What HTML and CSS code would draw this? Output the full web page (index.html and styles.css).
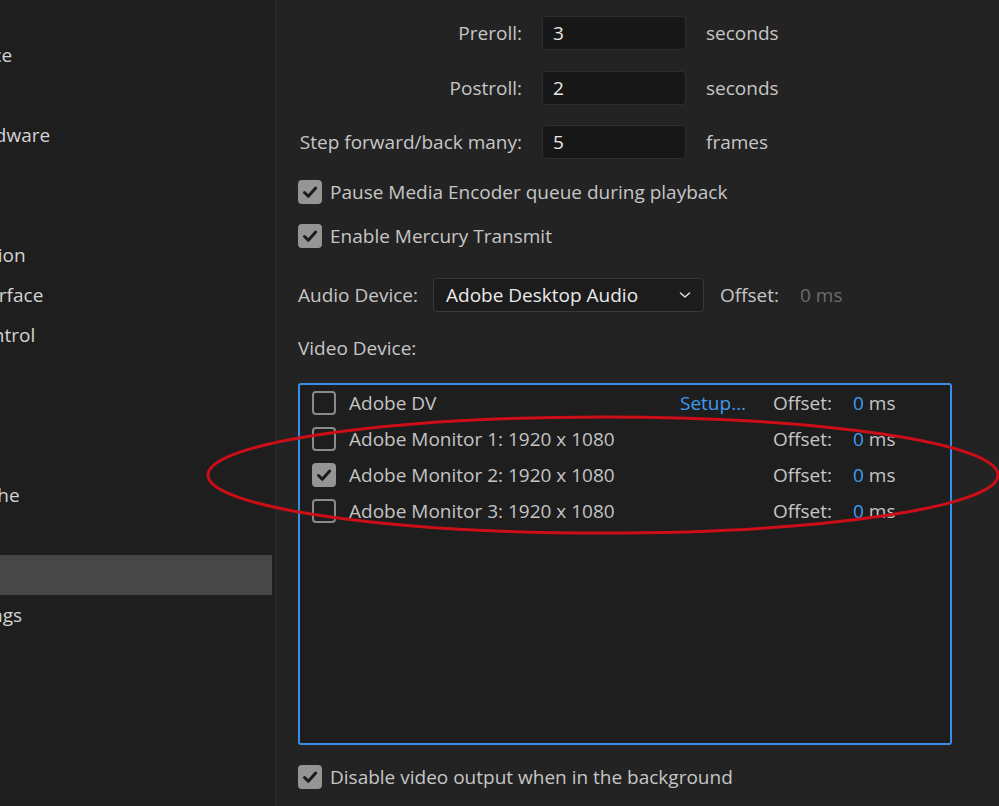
FILE: index.html
```html
<!DOCTYPE html>
<html>
<head>
<meta charset="utf-8">
<link rel="stylesheet" href="styles.css">
</head>
<body>
<div class="app">
  <aside class="sidebar">
    <ul class="cats">
      <li>General</li>
      <li>Appearance</li>
      <li>Audio</li>
      <li>Audio Hardware</li>
      <li>Auto Save</li>
      <li>Capture</li>
      <li>Collaboration</li>
      <li>Control Surface</li>
      <li>Device Control</li>
      <li>Graphics</li>
      <li>Labels</li>
      <li>Media</li>
      <li>Media Cache</li>
      <li>Memory</li>
      <li class="sel">Playback</li>
      <li>Sync Settings</li>
      <li>Timeline</li>
      <li>Trim</li>
    </ul>
  </aside>
  <main class="main">
    <div class="fields">
      <span class="lbl">Preroll:</span><span class="num">3</span><span class="unit">seconds</span>
      <span class="lbl">Postroll:</span><span class="num">2</span><span class="unit">seconds</span>
      <span class="lbl">Step forward/back many:</span><span class="num">5</span><span class="unit">frames</span>
    </div>

    <div class="check first">
      <span class="box on"><svg viewBox="0 0 24 24"><path d="M6.5 12.5l3.8 3.8 7.4-8.2"/></svg></span>
      <span>Pause Media Encoder queue during playback</span>
    </div>
    <div class="check second">
      <span class="box on"><svg viewBox="0 0 24 24"><path d="M6.5 12.5l3.8 3.8 7.4-8.2"/></svg></span>
      <span>Enable Mercury Transmit</span>
    </div>

    <div class="audio">
      <span class="alabel">Audio Device:</span>
      <div class="select">
        <span>Adobe Desktop Audio</span>
        <svg class="chev" viewBox="0 0 12 8"><path d="M1.5 2l4.5 4 4.5-4"/></svg>
      </div>
      <span class="off">Offset:</span>
      <span class="dim">0 ms</span>
    </div>

    <div class="vlabel">Video Device:</div>

    <div class="devlist">
      <div class="dev">
        <span class="box"></span>
        <span class="name">Adobe DV</span>
        <span class="setup">Setup...</span>
        <span class="off">Offset:</span>
        <span class="val"><b>0</b> ms</span>
      </div>
      <div class="dev">
        <span class="box"></span>
        <span class="name">Adobe Monitor 1: 1920 x 1080</span>
        <span class="setup"></span>
        <span class="off">Offset:</span>
        <span class="val"><b>0</b> ms</span>
      </div>
      <div class="dev">
        <span class="box on"><svg viewBox="0 0 24 24"><path d="M6.5 12.5l3.8 3.8 7.4-8.2"/></svg></span>
        <span class="name">Adobe Monitor 2: 1920 x 1080</span>
        <span class="setup"></span>
        <span class="off">Offset:</span>
        <span class="val"><b>0</b> ms</span>
      </div>
      <div class="dev">
        <span class="box"></span>
        <span class="name">Adobe Monitor 3: 1920 x 1080</span>
        <span class="setup"></span>
        <span class="off">Offset:</span>
        <span class="val"><b>0</b> ms</span>
      </div>
    </div>

    <div class="check last">
      <span class="box on"><svg viewBox="0 0 24 24"><path d="M6.5 12.5l3.8 3.8 7.4-8.2"/></svg></span>
      <span>Disable video output when in the background</span>
    </div>
  </main>
  <svg class="annot" viewBox="0 0 999 806" width="999" height="806">
    <ellipse cx="603" cy="475" rx="395" ry="58" />
  </svg>
</div>
</body>
</html>
```

FILE: styles.css
```css
* { box-sizing: border-box; }
html, body {
  margin: 0;
  padding: 0;
  width: 999px;
  height: 806px;
  overflow: hidden;
  background: #232323;
  font-family: "Open Sans", "Noto Sans", sans-serif;
  font-size: 19px;
  color: #c6c6c6;
}
.app {
  position: relative;
  display: flex;
  width: 999px;
  height: 806px;
}
.sidebar {
  width: 276px;
  flex: none;
  background: #1e1e1e;
  border-right: 1px solid #2c2c2c;
  overflow: hidden;
}
.cats {
  list-style: none;
  margin: -5px 0 0 0;
  padding: 0;
  width: 272px;
}
.cats li {
  height: 40px;
  line-height: 40px;
  white-space: nowrap;
  text-indent: -94px;
  color: #d4d4d4;
}
.cats li.sel {
  background: #474747;
}
.main {
  flex: 1;
  padding: 16px 0 0 22px;
  display: flex;
  flex-direction: column;
  align-items: flex-start;
}
.fields {
  display: grid;
  grid-template-columns: 224px 144px auto;
  column-gap: 20px;
  row-gap: 20.5px;
  align-items: center;
}
.lbl {
  text-align: right;
  white-space: nowrap;
}
.num {
  height: 34px;
  line-height: 32px;
  background: #171717;
  border: 1px solid #2e2e2e;
  border-radius: 4px;
  padding-left: 10px;
  color: #e8e8e8;
}

.check {
  display: flex;
  align-items: center;
  gap: 8px;
  height: 24px;
  line-height: 24px;
  white-space: nowrap;
}
.check.first { margin-top: 21px; }
.check.second { margin-top: 20px; }
.check.last { margin-top: 20px; }

.box {
  width: 24px;
  height: 24px;
  flex: none;
  border: 2px solid #8a8a8a;
  border-radius: 4px;
  display: flex;
  align-items: center;
  justify-content: center;
}
.box.on {
  background: #959595;
  border-color: #959595;
}
.box svg {
  width: 24px;
  height: 24px;
  flex: none;
  fill: none;
  stroke: #1c1c1c;
  stroke-width: 3;
  stroke-linecap: round;
  stroke-linejoin: round;
}

.audio {
  margin-top: 30px;
  display: flex;
  align-items: center;
  height: 34px;
  white-space: nowrap;
}
.alabel { width: 135px; }
.select {
  width: 271px;
  height: 34px;
  background: #1c1c1c;
  border: 1px solid #383838;
  border-radius: 4px;
  display: flex;
  align-items: center;
  justify-content: space-between;
  padding: 0 12px;
  color: #eaeaea;
}
.chev {
  width: 12px;
  height: 8px;
  fill: none;
  stroke: #d8d8d8;
  stroke-width: 1.6;
  stroke-linecap: round;
  stroke-linejoin: round;
}
.audio .off { margin-left: 16px; width: 80px; }
.dim { color: #6c6c6c; }

.vlabel {
  margin-top: 24px;
  height: 24px;
  line-height: 24px;
}

.devlist {
  margin-top: 23px;
  width: 654px;
  height: 362px;
  background: #1e1e1e;
  border: 2px solid #3a8fe4;
  border-radius: 3px;
  padding: 0 0 0 12px;
}
.dev {
  display: grid;
  grid-template-columns: 24px 344px 93px 80px auto;
  align-items: center;
  height: 36px;
  white-space: nowrap;
}
.dev .name { padding-left: 13px; color: #c4c4c4; }
.setup { color: #3d9bf0; }
.val b { font-weight: normal; color: #3d9bf0; }

.annot {
  position: absolute;
  left: 0;
  top: 0;
  pointer-events: none;
}
.annot ellipse {
  fill: none;
  stroke: #cc0e18;
  stroke-width: 3;
}
```
